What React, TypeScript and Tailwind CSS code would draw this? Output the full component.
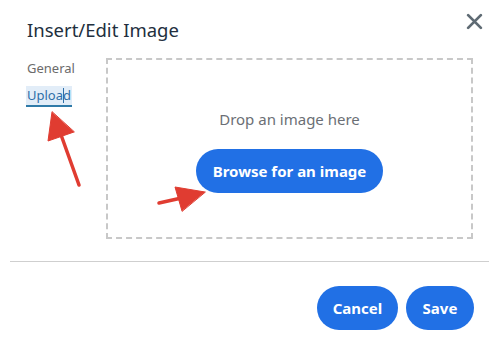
export default function App() {
  return (
    <div className="relative w-[499px] h-[352px] bg-white overflow-hidden font-['Noto_Sans',sans-serif]">
      {/* header */}
      <div className="flex items-start justify-between pl-[27px] pr-[16px] pt-[16px]">
        <h1 className="text-[18.5px] leading-[28px] text-[#222f3e]">Insert/Edit Image</h1>
        <button className="mt-[-3px] w-[17px] h-[17px] text-[#5f6b74]">
          <svg viewBox="0 0 16 16" width="17" height="17" fill="none" stroke="currentColor" strokeWidth="2.6" strokeLinecap="round">
            <path d="M2 2 L14 14 M14 2 L2 14" />
          </svg>
        </button>
      </div>

      {/* body */}
      <div className="flex pl-[27px] pr-[26px] mt-[14px]">
        <nav className="w-[79px] flex flex-col items-start pt-[1px]">
          <span className="text-[13px] leading-[18px] text-[#6b6b6b]">General</span>
          <span className="relative mt-[9px] -ml-[1px] px-[1px] h-[21px] leading-[19px] text-[13px] text-[#2f6fa8] bg-[#e2edf8] border-b-2 border-[#2f7aa8]">
            Upload
            <span className="absolute left-[37px] top-[2px] w-px h-[15px] bg-[#2f6fa8]" />
          </span>
        </nav>
        <div className="flex-1 h-[181px] border-2 border-dashed border-[#c8c8c8] flex flex-col items-center pt-[49px]">
          <p className="text-[15px] leading-[20px] text-[#6b6f75]">Drop an image here</p>
          <button className="mt-[20px] h-[44px] px-[17px] rounded-full bg-[#2170e5] text-white font-bold text-[15px]">
            Browse for an image
          </button>
        </div>
      </div>

      {/* footer */}
      <div className="mx-[10px] mt-[22px] border-t border-[#cfcfcf]" />
      <div className="flex justify-end gap-[8px] pr-[25px] mt-[24px]">
        <button className="h-[44px] w-[81px] rounded-full bg-[#2170e5] text-white font-bold text-[15px]">Cancel</button>
        <button className="h-[44px] w-[68px] rounded-full bg-[#2170e5] text-white font-bold text-[15px]">Save</button>
      </div>

      {/* annotation arrows */}
      <svg className="absolute inset-0 pointer-events-none" width="499" height="352">
        <g fill="#e03c31" stroke="#e03c31" strokeLinecap="round" strokeLinejoin="round">
          <line x1="79" y1="185" x2="60" y2="132" strokeWidth="3.5" />
          <polygon points="52,112 48,141 74,132" strokeWidth="1" />
          <line x1="159" y1="203" x2="186" y2="197" strokeWidth="3.5" />
          <polygon points="205,192 175,187 182,211" strokeWidth="1" />
        </g>
      </svg>
    </div>
  )
}
